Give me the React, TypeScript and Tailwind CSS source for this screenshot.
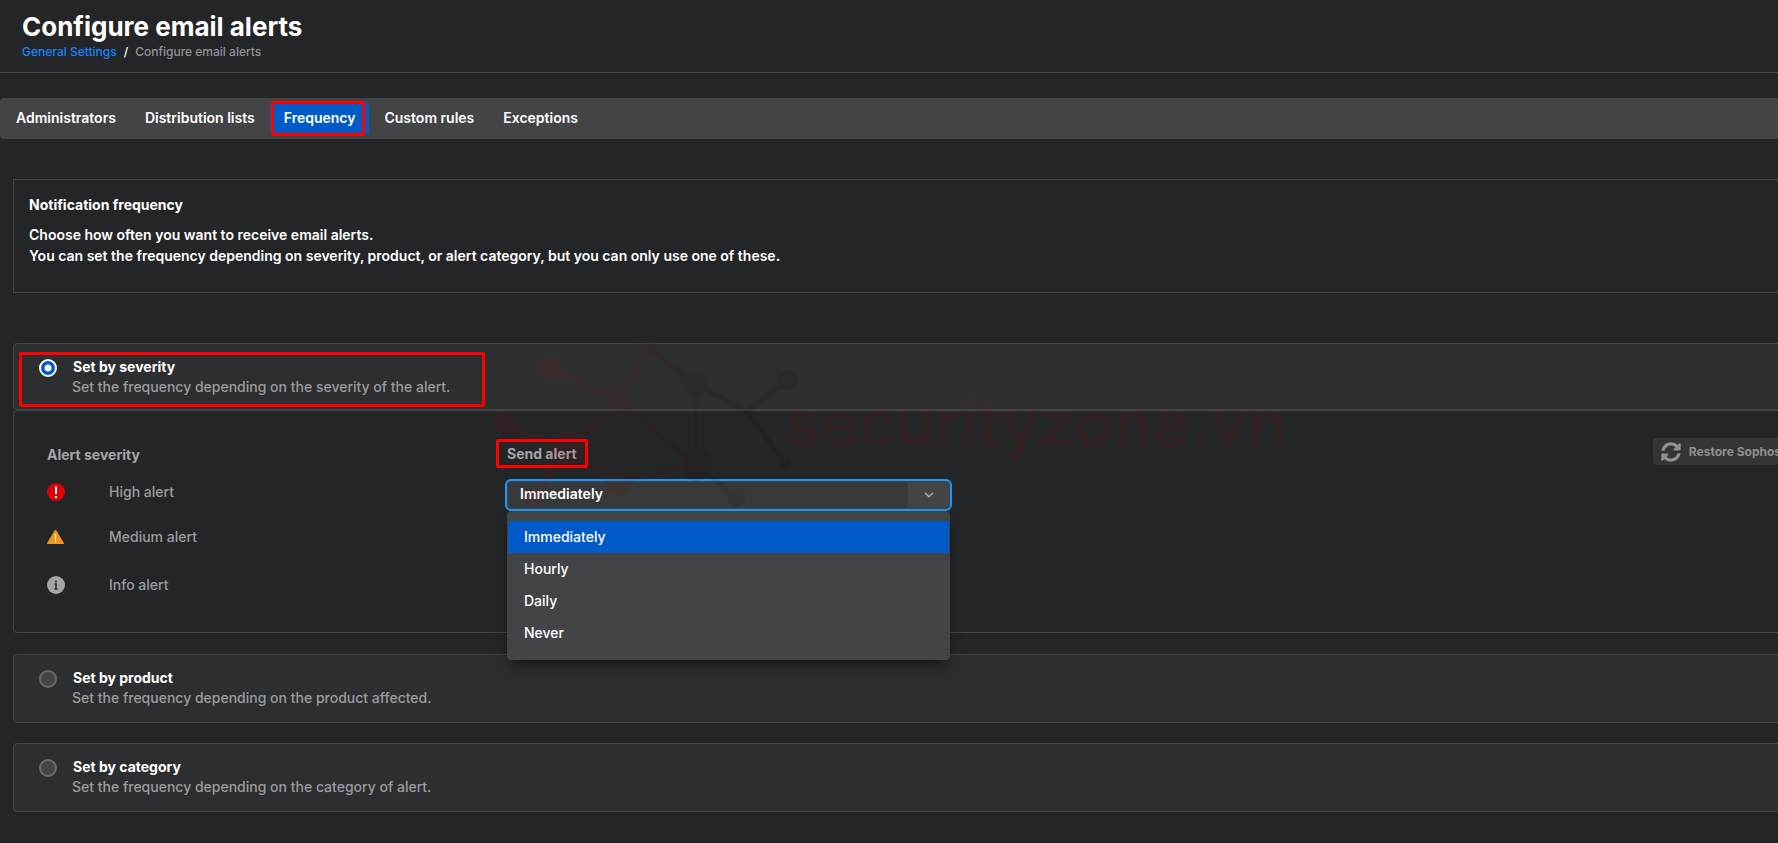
import React, { useState } from 'react';
import { ChevronDown } from 'lucide-react';
import { FaSyncAlt } from 'react-icons/fa';

const TABS = ['Administrators', 'Distribution lists', 'Frequency', 'Custom rules', 'Exceptions'];
const FREQUENCIES = ['Immediately', 'Hourly', 'Daily', 'Never'];

interface OptionCardProps {
  id: string;
  title: string;
  description: string;
  checked: boolean;
  onSelect: (id: string) => void;
  className?: string;
  children?: React.ReactNode;
}

const OptionCard = ({ id, title, description, checked, onSelect, className = '', children }: OptionCardProps) => {
  return (
    <div className={`relative flex rounded border border-[#434446] bg-[#2d2e2f] pl-[25px] ${className}`}>
      <input
        type="radio"
        id={id}
        name="frequencyMode"
        checked={checked}
        onChange={() => onSelect(id)}
        className="mt-[15px] size-[18px] shrink-0 appearance-none rounded-full border-2 border-[#6a6b6d] bg-[#434446] checked:border-white checked:bg-[radial-gradient(circle,#fff_3px,#005bc8_4px)]"
      />
      <label htmlFor={id} className="ml-[15px] mt-[13px] leading-5">
        <span className="block pl-px font-bold text-white">{title}</span>
        <span className="block font-medium text-[#9b9ca0]">{description}</span>
      </label>
      {children}
    </div>
  );
};

const HighIcon = () => (
  <svg width="18" height="18" viewBox="0 0 18 18" aria-hidden="true">
    <circle cx="9" cy="9" r="9" fill="#dc000d" />
    <path d="M9 3.5v7.5M9 13v2" stroke="#fff" strokeWidth="2" />
  </svg>
);

const MediumIcon = () => (
  <svg width="18" height="18" viewBox="0 0 18 18" aria-hidden="true">
    <path d="M8.5 2.8 16 15.2H1z" fill="#ec9a1e" stroke="#ec9a1e" strokeWidth="1.8" strokeLinejoin="round" />
    <path d="M8.5 6v6M8.5 13v1.5" stroke="#fff" strokeWidth="1.2" />
  </svg>
);

const InfoIcon = () => (
  <svg width="18" height="18" viewBox="0 0 18 18" aria-hidden="true">
    <circle cx="9" cy="9" r="9" fill="#a3a4a8" />
    <path d="M9 4.5v2M7.5 8H9v5M7.5 13h3" fill="none" stroke="#2d2e2f" strokeWidth="1.6" />
  </svg>
);

const Watermark = () => (
  <svg
    className="pointer-events-none absolute left-[490px] top-[330px] z-10 opacity-8"
    width="820"
    height="190"
    viewBox="490 330 820 190"
    aria-hidden="true"
  >
    <defs>
      <linearGradient id="wm" gradientUnits="userSpaceOnUse" x1="490" y1="0" x2="760" y2="0">
        <stop offset="0.3" stopColor="#c80000" />
        <stop offset="0.8" stopColor="#200000" />
        <stop offset="1" stopColor="#000" />
      </linearGradient>
    </defs>
    <path
      d="M550 368 618 402 645 346 696 384 747 412 787 380M747 412 785 463M696 384V464L618 402 567 450 503 423M567 450 533 498M567 450 618 482 696 464 737 498"
      fill="none"
      stroke="url(#wm)"
      strokeWidth="5"
    />
    <g fill="url(#wm)">
      <circle cx="550" cy="368" r="12" />
      <circle cx="645" cy="347" r="8" />
      <circle cx="618" cy="402" r="13" />
      <circle cx="696" cy="384" r="11" />
      <circle cx="787" cy="380" r="10" />
      <circle cx="785" cy="463" r="6" />
      <circle cx="696" cy="464" r="17" />
      <circle cx="503" cy="423" r="10" />
      <circle cx="567" cy="450" r="19" />
      <circle cx="618" cy="482" r="13" />
      <circle cx="533" cy="498" r="7" />
      <circle cx="737" cy="498" r="9" />
    </g>
    <text x="785" y="446" fill="#c00000" className="font-['Inter',sans-serif] text-[64px] font-semibold">
      securityzone.vn
    </text>
  </svg>
);

const SeverityPanel = () => {
  const [frequency, setFrequency] = useState('Immediately');

  return (
    <div className="flex h-[223px] rounded border border-[#434446] pl-[33px] pr-[30px] text-[#a3a4a8]">
      <div className="w-[449px] shrink-0 pt-[34px]">
        <h3 className="leading-5 font-bold">Alert severity</h3>
        <ul className="font-medium text-[#9b9ca0]">
          <li className="mt-[17px] flex h-5 items-center gap-11">
            <HighIcon />
            High alert
          </li>
          <li className="mt-[25px] flex h-5 items-center gap-11">
            <MediumIcon />
            Medium alert
          </li>
          <li className="mt-7 flex h-5 items-center gap-11">
            <InfoIcon />
            Info alert
          </li>
        </ul>
      </div>
      <div className="w-[456px] shrink-0 pt-7">
        <label
          htmlFor="sendAlert"
          className="inline-block h-[29px] rounded-xs border-[3px] border-[#ff0000] px-2 leading-[23px] font-bold"
        >
          Send alert
        </label>
        <div className="relative ml-[9px] mt-[11px]">
          <div className="flex h-8 items-center rounded-md border-2 border-[#1697ff] bg-[#434446] pl-px">
            <select
              id="sendAlert"
              value={frequency}
              onChange={(e) => setFrequency(e.target.value)}
              className="h-[26px] min-w-0 flex-1 appearance-none rounded bg-[#373839] pl-3 pb-[2px] font-semibold text-white outline-none"
            >
              {FREQUENCIES.map((item) => (
                <option key={item}>{item}</option>
              ))}
            </select>
            <ChevronDown size={14} strokeWidth={3} className="mx-[14px] shrink-0" />
          </div>
          <ul
            role="listbox"
            aria-label="Send alert"
            className="absolute inset-x-[2px] top-8 z-20 rounded border border-[#434446] bg-[#434446] pt-[9px] pb-[10px] text-white shadow-lg shadow-black/40"
          >
            {FREQUENCIES.map((item) => (
              <li
                key={item}
                role="option"
                aria-selected={item === frequency}
                onClick={() => setFrequency(item)}
                className="h-8 pl-4 leading-8 font-medium aria-selected:bg-[#005bc8]"
              >
                {item}
              </li>
            ))}
          </ul>
        </div>
      </div>
      <button
        type="button"
        className="mt-[27px] ml-auto flex h-[27px] shrink-0 items-center gap-2 rounded bg-[#343536] px-2 text-xs font-bold whitespace-nowrap text-[#919191]"
      >
        <FaSyncAlt size={20} />
        Restore Sophos defaults
      </button>
    </div>
  );
};

export default function App() {
  const [tab, setTab] = useState('Frequency');
  const [mode, setMode] = useState('severity');

  return (
    <div className="relative min-h-screen overflow-hidden bg-[#242527] font-['Inter',sans-serif] text-sm text-white">
      <header className="border-b border-[#434446] pt-[10px] pb-3 pl-[22px]">
        <h1 className="text-[26px] leading-[33px] font-bold">Configure email alerts</h1>
        <nav aria-label="Breadcrumb" className="flex text-xs leading-[17px] font-medium">
          <a href="#general" className="text-[#1a84ff]">
            General Settings
          </a>
          <span className="mx-[7px]">/</span>
          <span className="text-[#8f9499]">Configure email alerts</span>
        </nav>
      </header>

      <nav
        aria-label="Alert settings"
        className="mt-[25px] flex h-[41px] items-center gap-px rounded-l bg-[#434446] pl-[2px]"
      >
        {TABS.map((item) => (
          <button
            key={item}
            type="button"
            onClick={() => setTab(item)}
            className={`relative h-[33px] rounded px-[14px] pb-[2px] font-semibold ${item === tab ? 'bg-[#005bc8]' : ''}`}
          >
            {item}
            {item === 'Frequency' && (
              <span className="absolute -inset-y-px right-1 left-px rounded-xs border-[3px] border-[#ff0000]" />
            )}
          </button>
        ))}
      </nav>

      {/* content is wider than the viewport, the right edge is clipped */}
      <main className="mt-10 -mr-[93px] ml-[13px]">
        <section className="h-[114px] border border-[#434446] pt-[15px] pl-[15px] font-semibold">
          <h2 className="leading-5 font-bold">Notification frequency</h2>
          <p className="mt-[9px] leading-[21px]">
            Choose how often you want to receive email alerts.
            <br />
            You can set the frequency depending on severity, product, or alert category, but you can only use one of
            these.
          </p>
        </section>

        <OptionCard
          id="severity"
          title="Set by severity"
          description="Set the frequency depending on the severity of the alert."
          checked={mode === 'severity'}
          onSelect={setMode}
          className="mt-[50px] h-[67px]"
        >
          <span className="pointer-events-none absolute top-2 left-[5px] h-[55px] w-[466px] rounded-xs border-[3px] border-[#ff0000]" />
        </OptionCard>
        <SeverityPanel />
        <OptionCard
          id="product"
          title="Set by product"
          description="Set the frequency depending on the product affected."
          checked={mode === 'product'}
          onSelect={setMode}
          className="mt-[21px] h-[69px]"
        />
        <OptionCard
          id="category"
          title="Set by category"
          description="Set the frequency depending on the category of alert."
          checked={mode === 'category'}
          onSelect={setMode}
          className="mt-5 h-[69px]"
        />
      </main>
      <Watermark />
    </div>
  );
}
